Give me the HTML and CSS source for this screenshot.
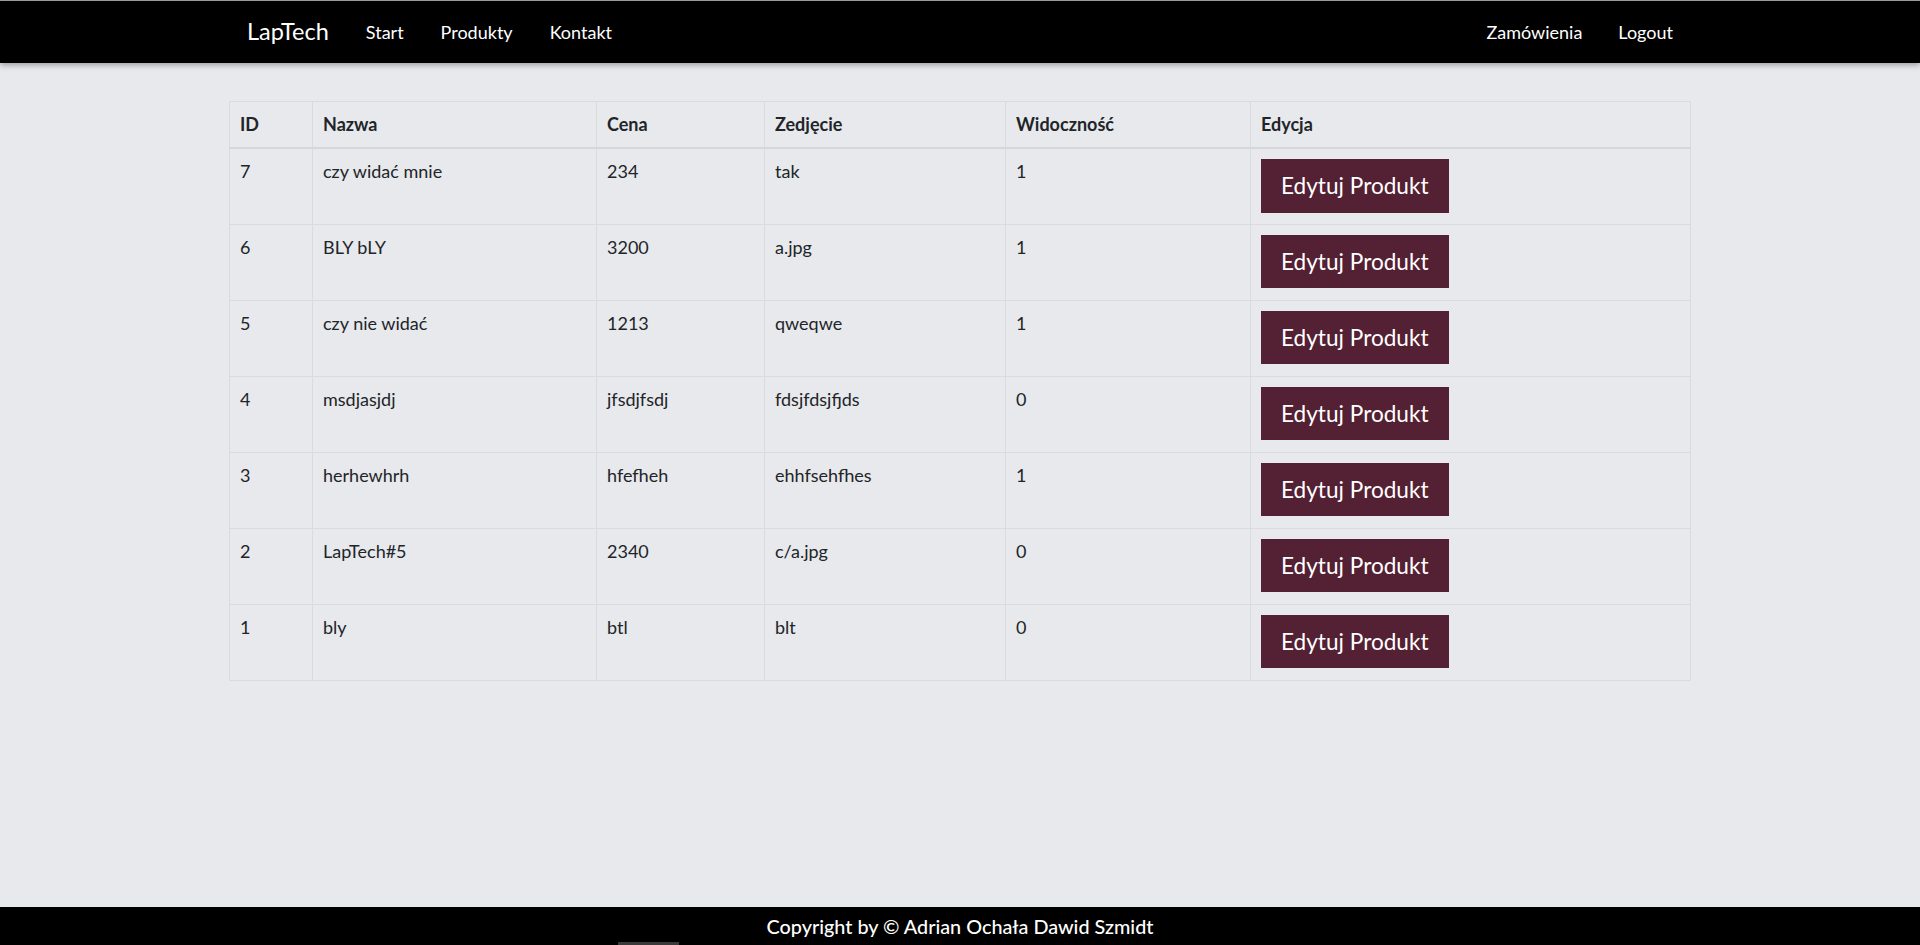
FILE: index.html
```html
<!DOCTYPE html>
<html lang="pl">
<head>
<meta charset="utf-8">
<title>LapTech - Produkty</title>
<link rel="stylesheet" href="styles.css">
</head>
<body>
<header class="navbar">
  <div class="nav-inner">
    <div class="nav-left">
      <a class="brand" href="#">LapTech</a>
      <a class="nav-link" href="#">Start</a>
      <a class="nav-link" href="#">Produkty</a>
      <a class="nav-link" href="#">Kontakt</a>
    </div>
    <div class="nav-right">
      <a class="nav-link" href="#">Zamówienia</a>
      <a class="nav-link" href="#">Logout</a>
    </div>
  </div>
</header>

<main class="content">
  <table class="products">
    <colgroup>
      <col class="c-id">
      <col class="c-name">
      <col class="c-price">
      <col class="c-img">
      <col class="c-vis">
      <col class="c-edit">
    </colgroup>
    <thead>
      <tr><th>ID</th><th>Nazwa</th><th>Cena</th><th>Zedjęcie</th><th>Widoczność</th><th>Edycja</th></tr>
    </thead>
    <tbody>
      <tr><td>7</td><td>czy widać mnie</td><td>234</td><td>tak</td><td>1</td><td><button class="btn-edit">Edytuj Produkt</button></td></tr>
      <tr><td>6</td><td>BLY bLY</td><td>3200</td><td>a.jpg</td><td>1</td><td><button class="btn-edit">Edytuj Produkt</button></td></tr>
      <tr><td>5</td><td>czy nie widać</td><td>1213</td><td>qweqwe</td><td>1</td><td><button class="btn-edit">Edytuj Produkt</button></td></tr>
      <tr><td>4</td><td>msdjasjdj</td><td>jfsdjfsdj</td><td>fdsjfdsjfjds</td><td>0</td><td><button class="btn-edit">Edytuj Produkt</button></td></tr>
      <tr><td>3</td><td>herhewhrh</td><td>hfefheh</td><td>ehhfsehfhes</td><td>1</td><td><button class="btn-edit">Edytuj Produkt</button></td></tr>
      <tr><td>2</td><td>LapTech#5</td><td>2340</td><td>c/a.jpg</td><td>0</td><td><button class="btn-edit">Edytuj Produkt</button></td></tr>
      <tr><td>1</td><td>bly</td><td>btl</td><td>blt</td><td>0</td><td><button class="btn-edit">Edytuj Produkt</button></td></tr>
    </tbody>
  </table>
</main>

<footer class="footer">
  <p class="copy">Copyright by © Adrian Ochała Dawid Szmidt</p>
  <span class="footer-mark"></span>
</footer>
</body>
</html>
```

FILE: styles.css
```css
html {
  font-size: 18px;
}

* {
  box-sizing: border-box;
}

body {
  margin: 0;
  min-height: 945px;
  display: flex;
  flex-direction: column;
  background: #e8e9ec;
  color: #212529;
  font-family: Lato, "Open Sans", "Liberation Sans", sans-serif;
  font-size: 18px;
  line-height: 1.5;
}

/* ---------- navbar ---------- */
.navbar {
  height: 63px;
  background: #000;
  border-top: 1px solid #9a9a9a;
  box-shadow: 0 2px 6px rgba(0, 0, 0, 0.35);
  position: relative;
  z-index: 2;
}

.nav-inner {
  width: 1426px;
  height: 100%;
  margin: 0 auto;
  display: flex;
  align-items: center;
  justify-content: space-between;
}

.nav-left,
.nav-right {
  display: flex;
  align-items: center;
  gap: 37px;
}

.nav-right {
  gap: 36px;
}

.brand {
  color: #fff;
  text-decoration: none;
  font-size: 23.5px;
  line-height: 33.75px;
}

.nav-link {
  color: #fff;
  text-decoration: none;
  font-size: 18px;
  line-height: 27px;
}

/* ---------- table ---------- */
.content {
  flex: 1;
  padding-top: 38px;
}

.products {
  width: 1462px;
  margin: 0 auto;
  border-collapse: collapse;
  table-layout: fixed;
}

.c-id { width: 83px; }
.c-name { width: 284px; }
.c-price { width: 168px; }
.c-img { width: 241px; }
.c-vis { width: 245px; }

.products th,
.products td {
  border: 1px solid #dadbdd;
  padding: 9px 9px 9px 10px;
  text-align: left;
  vertical-align: top;
}

.products th {
  font-weight: 700;
  border-bottom: 2px solid #d6d7d8;
}

.products td {
  height: 76px;
}

.btn-edit {
  display: inline-block;
  margin-top: 1px;
  background: #542033;
  color: #fff;
  border: 1px solid #542033;
  border-radius: 0;
  padding: 9px 19px;
  font-family: Lato, "Open Sans", "Liberation Sans", sans-serif;
  font-size: 22.6px;
  line-height: 33.75px;
  cursor: pointer;
}

/* ---------- footer ---------- */
.footer {
  height: 38px;
  background: #000;
  position: relative;
  display: flex;
  align-items: center;
  justify-content: center;
}

.copy {
  margin: 0;
  color: #fff;
  font-size: 19.8px;
  line-height: 27px;
  font-weight: 500;
}

.footer-mark {
  position: absolute;
  left: 618px;
  bottom: 0;
  width: 61px;
  height: 3px;
  background: #3a3a3a;
}
```
